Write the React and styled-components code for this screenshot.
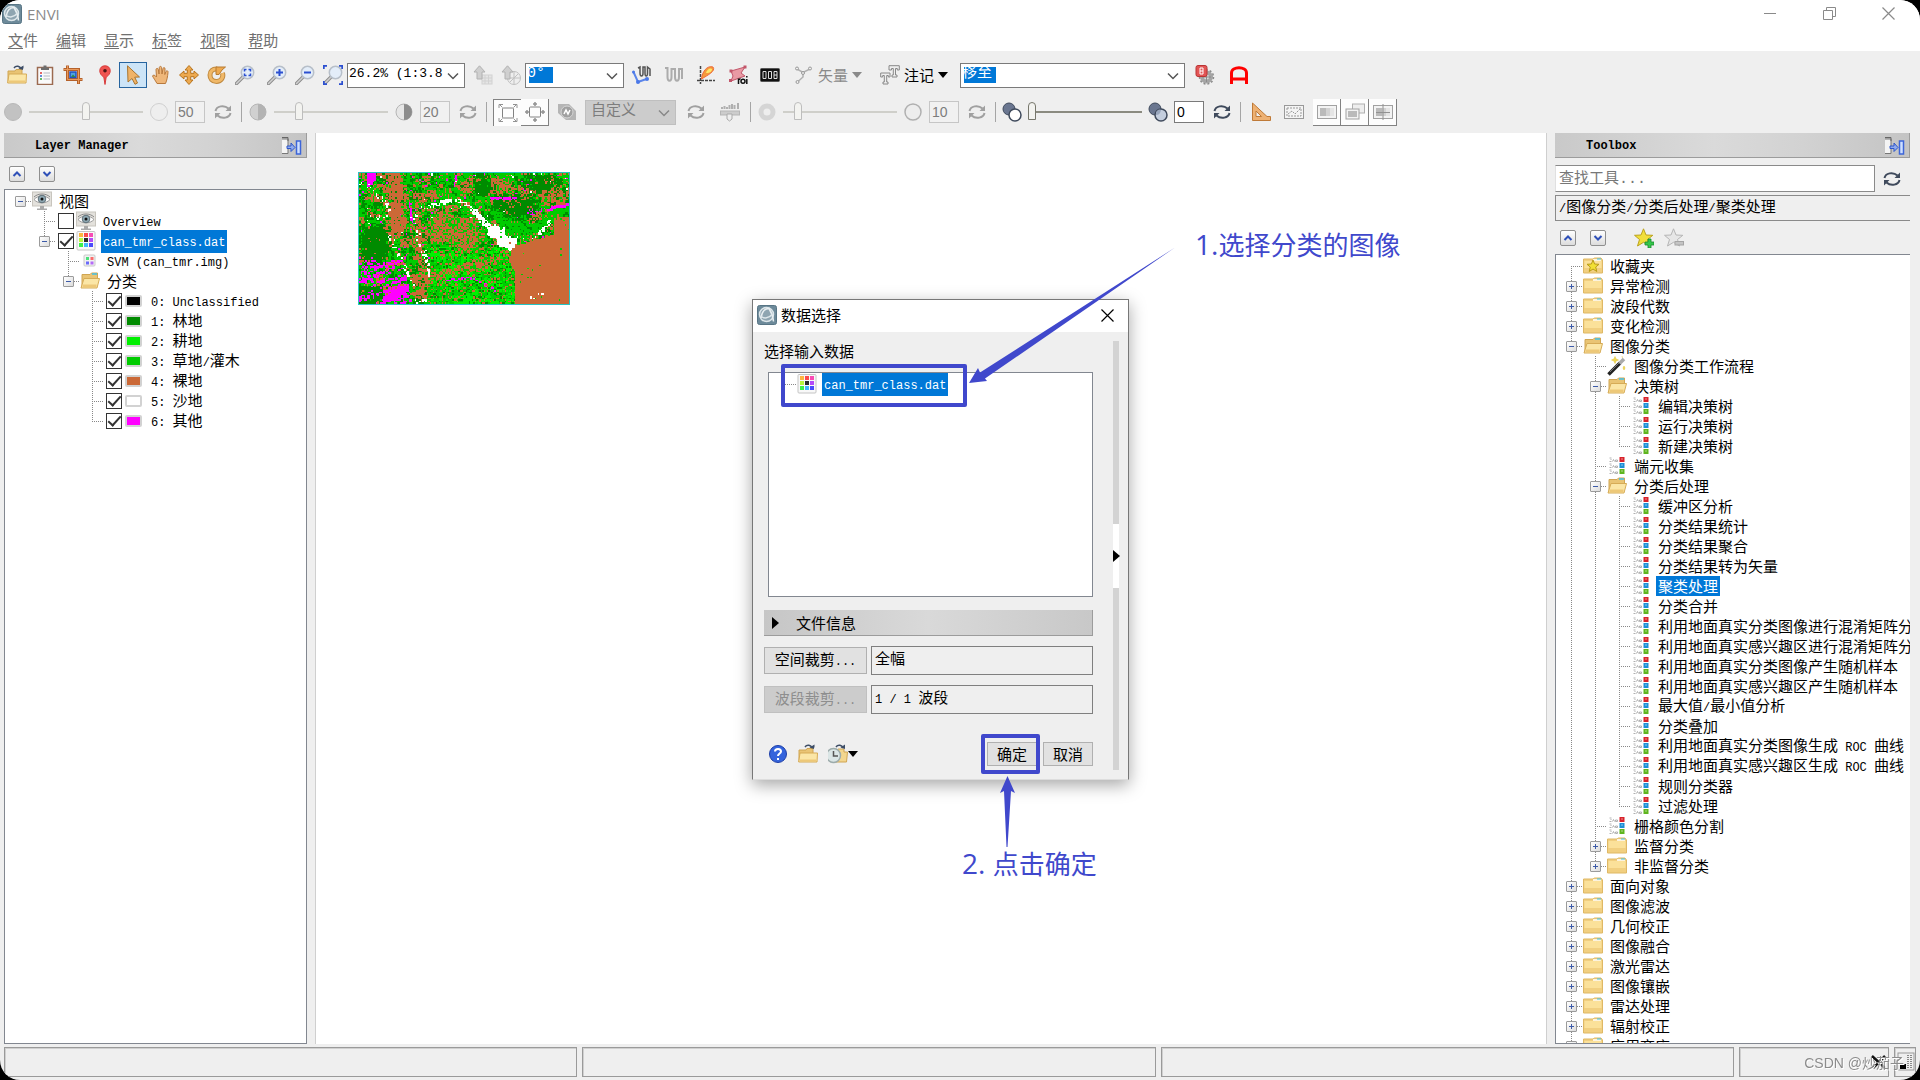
import React from "react";
import styled, { createGlobalStyle, css } from "styled-components";

const cjk = `"Noto Sans CJK SC", sans-serif`;
const mono = `"Liberation Mono", "Noto Sans CJK SC", monospace`;
const ink = "#4048cc";

const GlobalStyle = createGlobalStyle`
   * {
      box-sizing: border-box;
   }

   body {
      margin: 0;
      background: #000;
      font-family: ${cjk};
      font-size: 15px;
      line-height: 20px;
      color: #000;
   }

   button, input, select {
      font: inherit;
      color: inherit;
      margin: 0;
      padding: 0;
      border-radius: 0;
   }

   svg {
      display: block;
      flex: none;
   }
`;

/* ---------- shell ---------- */

const Window = styled.div`
   display: flex;
   flex-direction: column;
   height: 100vh;
   overflow: hidden;
   border-radius: 20px;
   background: #efefef;
`;

const TitleBar = styled.header`
   display: flex;
   align-items: center;
   height: 29px;
   padding: 0 20px 2px 2px;
   background: #fff;
`;

const AppName = styled.h1`
   flex: 1;
   margin: 0 0 0 5px;
   font-family: "Open Sans", sans-serif;
   font-size: 15px;
   font-weight: 400;
   color: #8a8a8a;
`;

const WindowButtons = styled.div`
   display: flex;
   gap: 35px;
`;

const PlainButton = styled.button`
   display: flex;
   align-items: center;
   justify-content: center;
   border: 0;
   background: none;
`;

const WindowButton = styled(PlainButton)`
   width: 24px;
   height: 24px;
   color: #8a8a8a;
`;

const MenuBar = styled.nav`
   display: flex;
   gap: 18px;
   height: 22px;
   padding-left: 8px;
   background: #fff;
`;

const MenuItem = styled(PlainButton)`
   color: #707070;
   white-space: nowrap;

   u {
      text-underline-offset: 2px;
   }
`;

/* ---------- tool bars ---------- */

const ToolBars = styled.div`
   display: flex;
   flex-direction: column;
   gap: 9px;
   padding: 10px 0 7px 3px;
`;

const ToolRow = styled.div`
   display: flex;
   align-items: center;
   gap: ${props => props.$gap || 0}px;
   height: 28px;
`;

const Group = styled.div`
   display: flex;
   align-items: center;
   gap: ${props => props.$gap || 0}px;
`;

const Tool = styled(PlainButton)`
   width: 28px;
   height: 28px;
   opacity: ${props => (props.$dim ? 0.55 : 1)};
   ${props =>
      props.$active &&
      css`
         border: 1px solid #26649f;
         background: #cce4f7;
         height: 26px;
      `}
`;

const MenuTool = styled(PlainButton)`
   gap: 4px;
   padding: 0 6px;
   color: ${props => (props.$dim ? "#8a8a8a" : "#000")};
`;

const ResetButton = styled(PlainButton)`
   width: 24px;
`;

const Combo = styled.div`
   position: relative;
   width: ${props => props.$width}px;
   color: ${props => (props.$dim ? "#888" : "#555")};

   svg {
      position: absolute;
      right: 6px;
      top: 9px;
      pointer-events: none;
   }
`;

const Select = styled.select`
   appearance: none;
   display: block;
   width: 100%;
   height: 25px;
   padding: 0 20px 4px 1px;
   border: 1px solid #7a7a7a;
   outline: 0;
   font-family: ${mono};
   font-size: ${props => props.$size || 15}px;
   background: #fff;
   color: #000;
   ${props =>
      props.$mark &&
      css`
         color: #fff;
         background: linear-gradient(#0078d7, #0078d7) 3px 3px /
            ${props.$mark}px 16px no-repeat #fff;
      `}

   option {
      color: #000;
   }

   &:disabled {
      opacity: 1;
      padding: 0 20px 0 5px;
      border-color: #bfbfbf;
      background: #cccccc;
      color: #7d7d7d;
   }
`;

const Separator = styled.span`
   width: 1px;
   height: 20px;
   margin: 0 6px;
   background: #a5a5a5;
`;

const Range = styled.input`
   appearance: none;
   width: 114px;
   height: 20px;
   background: none;

   &::-webkit-slider-runnable-track {
      height: 2px;
      background: ${props => (props.disabled ? "#cfcfca" : "#8b8b80")};
   }

   &::-webkit-slider-thumb {
      appearance: none;
      width: 8px;
      height: 18px;
      margin-top: -9px;
      border: 1px solid ${props => (props.disabled ? "#bdbdbd" : "#77776c")};
      border-radius: 4px 4px 0 0;
      background: #f3f3f0;
   }
`;

const NumberBox = styled.input`
   width: 30px;
   height: 22px;
   padding-left: 2px;
   border: 1px solid ${props => (props.disabled ? "#c6c6c6" : "#7a7a7a")};
   outline: 0;
   background: ${props => (props.disabled ? "#f1f1f1" : "#fff")};
   color: ${props => (props.disabled ? "#7d7d7d" : "#000")};
   font-family: "Liberation Sans", sans-serif;
   font-size: 14px;
`;

const Toggle = styled(PlainButton)`
   width: 28px;
   height: 27px;
   background: #fff;
   border: solid #777;
   border-width: ${props => (props.$pressed ? "1px 0 0 1px" : "0 1px 1px 0")};
   opacity: 0.9;
`;

/* ---------- panels ---------- */

const Workspace = styled.main`
   display: flex;
   flex: 1;
   min-height: 0;
   padding: 0 10px 0 4px;
`;

const Panel = styled.aside`
   display: flex;
   flex-direction: column;
   width: ${props => props.$width}px;
   min-height: 0;
`;

const PanelHeader = styled.div`
   display: flex;
   align-items: center;
   flex: none;
   height: 25px;
   padding: 1px 4px 0 31px;
   border: solid #9c9c9c;
   border-width: 0 1px 1px 0;
   background: linear-gradient(
      90deg,
      #c9c9c9,
      #dadada 45%,
      #d2d2d2 70%,
      #c4c4c4
   );

   h2 {
      flex: 1;
      margin: 0;
      font-family: ${mono};
      font-size: 12px;
      font-weight: 700;
   }
`;

const PanelTools = styled.div`
   display: flex;
   align-items: center;
   flex: none;
   height: ${props => props.$height}px;
   padding-left: 5px;
   gap: 14px;
`;

const FoldButton = styled(PlainButton)`
   width: 16px;
   height: 16px;
   border: 1px solid #8f8f8f;
   border-radius: 2px;
   background: linear-gradient(#fff, #dcdcdc);
`;

const Canvas = styled.section`
   position: relative;
   flex: 1;
   min-width: 0;
   margin: 0 8px;
   border: solid #cfcfcf;
   border-width: 0 1px;
   background: #fff;
`;

const SearchRow = styled.div`
   display: flex;
   align-items: center;
   gap: 7px;
   margin-top: 7px;
   padding-right: 8px;

   input {
      flex: 1;
      min-width: 0;
      height: 27px;
      padding: 2px 3px 0;
      border: 1px solid #8a8a8a;
      border-left-color: #e0e0e0;
      background: #fff;
      font-family: ${mono};
   }

   input::placeholder {
      color: #777;
      opacity: 1;
   }
`;

const PathBox = styled.output`
   display: block;
   flex: none;
   height: 26px;
   margin-top: 3px;
   padding: 0 3px;
   border: 1px solid #8a8a8a;
   border-right: 0;
   white-space: pre;
   overflow: hidden;
`;

/* ---------- tree ---------- */

const TreeBox = styled.ul`
   flex: 1;
   min-height: 0;
   margin: 0;
   padding: 1px 0 0 3px;
   border: 1px solid #828790;
   border-right-width: ${props => (props.$open ? 0 : 1)}px;
   background: #fff;
   list-style: none;
   overflow: hidden;
`;

const TreeRow = styled.li`
   display: flex;
   align-items: center;
   height: 20px;
   white-space: pre;
`;

const lines = {
   none: "12px 0 / 0 0",
   full: "12px 0 / 1px 100%",
   top: "12px 0 / 1px 50%",
   bottom: "12px 10px / 1px 50%"
};

const Guide = styled.span`
   display: flex;
   align-items: center;
   justify-content: center;
   flex: none;
   width: 24px;
   height: 20px;
   padding: 1px 0 0 1px;
   background: repeating-linear-gradient(#888 0 1px, transparent 1px 2px)
         ${props => lines[props.$line]} no-repeat,
      repeating-linear-gradient(90deg, #888 0 1px, transparent 1px 2px) 12px
         10px / ${props => (props.$arm ? 12 : 0)}px 1px no-repeat;
`;

const Expander = styled(PlainButton)`
   width: 11px;
   height: 11px;
   border: 1px solid #9b9b9b;
   border-radius: 1px;
   background: linear-gradient(135deg, #fff, #dcdcdc);
`;

const Check = styled.input`
   appearance: none;
   flex: none;
   width: 16px;
   height: 16px;
   margin: 0 2px;
   border: 1px solid #333;
   background: #fff;
   display: grid;
   place-items: center;

   &:checked::before {
      content: "";
      width: 11px;
      height: 5px;
      border: solid #333;
      border-width: 0 0 2px 2px;
      transform: translateY(-2px) rotate(-48deg);
   }
`;

const Swatch = styled.span`
   flex: none;
   width: 17px;
   height: 12px;
   margin: 0 2px 0 1px;
   border: 2px solid #d2d2d2;
   border-radius: 2px;
   background: ${props => props.$color};
`;

const Label = styled.span`
   margin-left: 5px;
   padding: 0 2px;
   background: ${props => (props.$selected ? "#0078d7" : "none")};
   color: ${props => (props.$selected ? "#fff" : "#000")};
`;

const Latin = styled.span`
   font-family: ${mono};
   font-size: 12px;
`;

/* ---------- dialog ---------- */

const Dialog = styled.section`
   position: absolute;
   left: 436px;
   top: 166px;
   width: 377px;
   border: 1px solid #777;
   border-bottom-color: #ddd;
   background: #efefef;
   box-shadow: 0 5px 16px rgba(0, 0, 0, 0.35);
`;

const DialogTitle = styled.header`
   display: flex;
   align-items: center;
   height: 32px;
   padding: 0 14px 2px 4px;
   background: #fff;

   h2 {
      flex: 1;
      margin: 0 0 0 4px;
      font-size: 15px;
      font-weight: 400;
   }
`;

const DialogBody = styled.div`
   display: flex;
   gap: 20px;
   padding: 9px 9px 9px 11px;
`;

const DialogMain = styled.div`
   display: flex;
   flex-direction: column;
   flex: 1;
   min-width: 0;
   gap: 10px;
`;

const DataList = styled.ul`
   height: 225px;
   margin: 1px 0 3px 4px;
   padding: 1px 0 0 4px;
   border: 1px solid #828790;
   background: #fff;
   list-style: none;
`;

const InfoHeader = styled.button`
   display: flex;
   align-items: center;
   gap: 17px;
   height: 26px;
   padding-left: 8px;
   border: solid #9c9c9c;
   border-width: 0 1px 1px 0;
   background: linear-gradient(90deg, #c6c6c6, #d9d9d9 50%, #c8c8c8);
`;

const FieldRow = styled.div`
   display: flex;
   align-items: center;
   gap: 4px;
`;

const Field = styled.output`
   flex: 1;
   height: 29px;
   padding: 1px 3px;
   border: 1px solid #7f7f7f;
   white-space: pre;
`;

const PushButton = styled.button`
   width: ${props => props.$width}px;
   height: ${props => props.$height}px;
   border: 1px solid #b0b0b0;
   background: #e1e1e1;
   white-space: nowrap;

   &:disabled {
      border-color: #c0c0c0;
      background: #cccccc;
      color: #8e8e8e;
   }
`;

const DialogFooter = styled.div`
   display: flex;
   align-items: center;
   justify-content: space-between;
   height: 24px;
   margin: 18px 0 4px 4px;
`;

const Strip = styled.div`
   display: flex;
   flex-direction: column;
   justify-content: center;
   width: 6px;
   background: #d3d3d3;

   button {
      height: 64px;
      background: #fff;
   }
`;

/* ---------- notes over the canvas ---------- */

const Mark = styled.span`
   position: absolute;
   left: ${props => props.$x}px;
   top: ${props => props.$y}px;
   width: ${props => props.$w}px;
   height: ${props => props.$h}px;
   border: 4px solid ${ink};
   border-radius: 2px;
   pointer-events: none;
`;

const Note = styled.p`
   position: absolute;
   left: ${props => props.$x}px;
   top: ${props => props.$y}px;
   margin: 0;
   font-size: 26px;
   line-height: 32px;
   color: ${ink};
   white-space: nowrap;
`;

const NoteNumber = styled.span`
   font-family: "Open Sans", sans-serif;
   font-size: 28px;
`;

const Arrows = styled.svg`
   position: absolute;
   left: 0;
   top: 0;
   pointer-events: none;
`;

const Scene = styled.div`
   position: absolute;
   left: 42px;
   top: 39px;
   border: 1px solid #27c4c4;
`;

/* ---------- status bar ---------- */

const StatusBar = styled.footer`
   display: flex;
   gap: 5px;
   height: 36px;
   padding: 3px 4px;
`;

const StatusBox = styled.div`
   display: flex;
   align-items: center;
   justify-content: flex-end;
   flex: ${props => (props.$width ? "none" : 1)};
   width: ${props => props.$width || 0}px;
   border: 1px solid #9a9a9a;
   box-shadow: inset 1px 1px 0 #d0d0d0;
`;

const Watermark = styled.p`
   position: fixed;
   right: 16px;
   bottom: 7px;
   margin: 0;
   font-family: "Liberation Sans", "Noto Sans CJK SC", sans-serif;
   font-size: 14px;
   color: #8c8c8c;
   text-shadow: 1px 1px 0 #fff;
`;

/* ---------- icons ---------- */

const Icon = ({ size = 20, children, ...rest }) => (
   <svg width={size} height={size} viewBox="0 0 20 20" fill="none" {...rest}>
      {children}
   </svg>
);

const Logo = () => (
   <Icon>
      <rect x="0.5" y="0.5" width="19" height="19" rx="2" fill="#6d8a9a" stroke="#587585" />
      <circle cx="9.500" cy="9.500" r="7" fill="#8fa5b1" stroke="#dde6ea" strokeWidth="1.500" />
      <path d="M4 13 C5 6 8 3.500 12 3.500 C15 8 16 12 16.500 16.500" stroke="#e8eef1" strokeWidth="1.500" />
      <path d="M3.500 11 C7 14 12 13.500 15.500 9" stroke="#dde6ea" strokeWidth="1.500" />
   </Icon>
);

const folderTop = "#fbe6a6";
const OpenFolder = () => (
   <Icon>
      <path d="M2 17 V3.500 H10 L11.500 2 H17.500 V8" fill="#e9c474" stroke="#d0a552" />
      <path d="M12 3 H17" stroke="#3fc1e8" strokeWidth="1.500" />
      <path d="M1 17 L4 7.500 H19.500 L17 17 Z" fill={folderTop} stroke="#d6ab56" />
      <path d="M2.500 15 H16.500" stroke="#edc878" strokeWidth="3" />
   </Icon>
);

const ClosedFolder = ({ star }) => (
   <Icon>
      <path d="M0.500 17 V3 H10 L11.500 2 H18 L19.500 4 V17 Z" fill="#f1cf80" stroke="#dfb865" />
      <path d="M10 4 H18" stroke="#fff" strokeWidth="1.500" />
      <path d="M14 3 H18" stroke="#3fc1e8" />
      <rect x="1.500" y="5" width="17" height="7" fill="#fbe19a" />
      {star && (
         <path d="M10 4 L11.600 8 L16 8.300 L12.700 11 L13.800 15.500 L10 13 L6.200 15.500 L7.300 11 L4 8.300 L8.400 8 Z" fill="#f2e034" stroke="#b99b18" />
      )}
   </Icon>
);

const OpenFile = () => (
   <Icon>
      <path d="M1 18 V6 H8 L9 4.500 H15 V9" fill="#e9c474" stroke="#d0a552" />
      <path d="M0.700 18 L2 9 H19.500 L19 18 Z" fill={folderTop} stroke="#d6ab56" />
      <path d="M2 16.500 H18" stroke="#edc878" strokeWidth="2" />
      <path d="M7 3 C9 0 13 1 14 4" stroke="#3d4d66" strokeWidth="1.500" />
      <path d="M11.500 3.500 H16.500 V0.500 Z M11.500 3.500 L16 5 V1 Z" fill="#3d4d66" />
   </Icon>
);

const RecentFile = () => (
   <Icon>
      <path d="M5 17 V6 H9 L10 5 H16 V8 H19.500 L18.500 18 H5 Z" fill="#f3d68e" stroke="#d0a552" />
      <path d="M8 3 C10 0 14 1 15 4" stroke="#3d4d66" strokeWidth="1.500" />
      <path d="M12.500 3.500 L17 5 V0.500 Z" fill="#3d4d66" />
      <circle cx="5.500" cy="11.500" r="7" fill="#dbe6e6" stroke="#9cabab" strokeWidth="1.500" />
      <path d="M5.500 7 V12 H10" stroke="#555" strokeWidth="1.500" />
   </Icon>
);

const Clipboard = () => (
   <Icon>
      <rect x="2.500" y="2.500" width="15" height="17" fill="#fff" stroke="#9b6a50" strokeWidth="1.500" />
      <rect x="4" y="4.500" width="12" height="13.500" fill="#fafafa" />
      <path d="M6 5 V2.500 H8.500 V0.500 H11.500 V2.500 H14 V5 Z" fill="#6d6d6d" />
      <path d="M8.500 8 H15 M8.500 11 H15 M8.500 14 H15" stroke="#b4bac1" />
      <path d="M5 8 H7" stroke="#d33" strokeWidth="1.500" />
      <path d="M5 11 H7" stroke="#36c" strokeWidth="1.500" />
      <path d="M5 14 H7" stroke="#3a3" strokeWidth="1.500" />
   </Icon>
);

const Crop = () => (
   <Icon>
      <path d="M4.500 0.500 V14.500 H19.500 M0.500 4.500 H15.500 V19" stroke="#b5612a" strokeWidth="3" />
      <path d="M4.500 1 V14.500 H19 M1 4.500 H15.500 V18.500" stroke="#e99a5c" />
      <rect x="7" y="7" width="6" height="5.500" fill="#4fa3e0" stroke="#1f4fc0" strokeWidth="1.500" />
      <path d="M8 12 L10 9.500 L12.500 12 Z" fill="#2a8a4a" />
   </Icon>
);

const Pin = () => (
   <Icon>
      <path d="M10 19.500 L8.800 12 C3 9 3.500 0.800 10 0.800 C16.500 0.800 17 9 11.200 12 Z" fill="#ef5350" stroke="#d83c3c" />
      <circle cx="10" cy="5.800" r="1.800" fill="#4a1515" />
   </Icon>
);

const Cursor = () => (
   <Icon>
      <path d="M4.500 0.800 L16.500 12 L11.700 12.200 L14.500 18 L12 19.300 L9 13.500 L5 17 Z" fill="#efb368" stroke="#a9752f" />
   </Icon>
);

const Hand = () => (
   <Icon>
      <path d="M6 18.500 C4 15 2.500 13 1.500 11 C2 9.500 4 10 5.500 12 L5 4.500 C5.200 3 7 3 7.300 4.500 L8 9 L8.300 2.500 C8.600 1 10.400 1 10.600 2.500 L11 9 L12 3.500 C12.500 2 14 2.300 14 4 L13.800 9.500 L15 6.500 C16 5 17.300 6 17 7.500 C16.500 12 16 15 14.500 18.500 Z" fill="#efb77a" stroke="#b8793c" />
   </Icon>
);

const Move = () => (
   <Icon>
      <path d="M10 0.500 L14 5 H11.700 V8.300 H15 V6 L19.500 10 L15 14 V11.700 H11.700 V15 H14 L10 19.500 L6 15 H8.300 V11.700 H5 V14 L0.500 10 L5 6 V8.300 H8.300 V5 H6 Z" fill="#eda94f" stroke="#b87520" />
   </Icon>
);

const Rotate = () => (
   <Icon>
      <path d="M15.500 8 C17 13.500 13 16.500 9.500 16.500 C5 16.500 3 13.500 3 10 C3 6 6 3.500 10 4" stroke="#c08a40" strokeWidth="5" />
      <path d="M15.500 8 C17 13.500 13 16.500 9.500 16.500 C5 16.500 3 13.500 3 10 C3 6 6 3.500 10 4" stroke="#f0b868" strokeWidth="3" />
      <path d="M9 9.500 V2 H18.500 L15 5 L12 9.500 Z" fill="#eda94f" stroke="#b87b30" />
   </Icon>
);

const Magnifier = ({ kind }) => (
   <Icon>
      <path d="M1.500 18.500 L8 12" stroke="#8d8d8d" strokeWidth="3.500" strokeLinecap="round" />
      <path d="M1.500 18.500 L8 12" stroke="#d0d0d0" strokeWidth="1.500" strokeLinecap="round" />
      <circle cx="12.500" cy="7.500" r="6.200" fill="#e3edf9" stroke="#b7bfc9" strokeWidth="1.500" />
      {kind === "in" && <path d="M12.500 4 V11 M9 7.500 H16" stroke="#2b4fd0" strokeWidth="2" />}
      {kind === "out" && <path d="M9 7.500 H16" stroke="#2b4fd0" strokeWidth="2" />}
      {kind === "box" && (
         <path d="M9.500 6.500 V4.500 H11.500 M13.500 4.500 H15.500 V6.500 M15.500 8.500 V10.500 H13.500 M11.500 10.500 H9.500 V8.500" stroke="#2b4fd0" strokeWidth="1.500" />
      )}
      {kind === "fit" && (
         <path d="M0.700 4 V0.700 H4 M16 0.700 H19.300 V4 M19.300 16 V19.300 H16 M4 19.300 H0.700 V16" stroke="#2b4fd0" strokeWidth="2" />
      )}
   </Icon>
);

const NorthUp = ({ dial }) => (
   <Icon>
      {dial ? (
         <g stroke="#9a9a9a">
            <circle cx="13" cy="13" r="6.500" fill="#eee" />
            <path d="M13 6.500 V19 M7 13 H19 M9 17 L17 9" />
         </g>
      ) : (
         <g stroke="#bbb">
            <rect x="9" y="10" width="10" height="9" fill="#ddd" />
            <path d="M12 10 V19 M15.500 10 V19 M9 13 H19 M9 16 H19" />
         </g>
      )}
      <path d="M6.500 0.800 L12 7 H9 V14 H4 V7 H1 Z" fill="#b5b5b5" stroke="#808080" />
   </Icon>
);

const Wave = ({ full }) => (
   <Icon>
      {full ? (
         <path d="M6 3 L8 2 V8 C8 12 11 12 11 8 V2 H13 V8 C13 12 15.500 12 15.500 8 V2 L18 4 V11" stroke="#555" strokeWidth="1.500" />
      ) : (
         <path d="M1 3 H3.500 V12 C3.500 17 7.500 17 7.500 12 V4 H11 V12 C11 17 15 17 15 12 V4 H18 V14" stroke="#777" strokeWidth="2" />
      )}
      {full && (
         <g>
            <path d="M1.500 7 L6 17 L14.500 14" stroke="#5b85ea" strokeWidth="2" />
            <circle cx="1.500" cy="7" r="1.500" fill="#4a78e8" />
            <circle cx="6" cy="17" r="2" fill="#4a78e8" />
            <circle cx="15" cy="14" r="2" fill="#4a78e8" />
         </g>
      )}
   </Icon>
);

const Scatter = () => (
   <Icon>
      <path d="M4.500 1 V19 M1 15.500 H19" stroke="#444" strokeWidth="1.500" strokeDasharray="3 1" />
      <path d="M5.500 14 C6 7 11 0 17 2 C20 6 12 10 5.500 14 Z" fill="#f59a3c" stroke="#ee6b3c" />
      <path d="M10 8 C11 4 14.500 2.500 16 4 C16 7 12.500 8.500 10 8 Z" fill="#ffe76a" />
   </Icon>
);

const Roi = () => (
   <Icon>
      <path d="M3 6 L17 2 L13 8 L17 11 L3 16 L5 11 Z" fill="#e99aa4" stroke="#c2566a" />
      <g fill="#c2566a">
         <rect x="1.500" y="4.500" width="3" height="3" />
         <rect x="15.500" y="0.500" width="3" height="3" />
         <rect x="1" y="14" width="3" height="3" />
      </g>
      <path d="M10.500 19 V13.500 M10.500 15 L12.500 13.500 M18.800 19 V14 M18.800 12.500 V11" stroke="#111" strokeWidth="1.500" />
      <circle cx="15" cy="16.300" r="2" stroke="#111" strokeWidth="1.500" />
   </Icon>
);

const Counter = () => (
   <Icon>
      <rect x="0.500" y="3.500" width="19" height="13" rx="1" fill="#111" stroke="#555" />
      <path d="M3 6.500 H6 V13.500 H3 Z M8.500 6.500 H11.500 V13.500 H8.500 Z M14 6.500 H17 V13.500 H14 Z M14 10 H17" stroke="#ddd" />
   </Icon>
);

const Vector = () => (
   <Icon>
      <path d="M3 4 L9 7.500 L17 3.500 M9 7.500 L9 12 L3.500 17" stroke="#b0b0b0" strokeWidth="1.500" />
      <g fill="#eee" stroke="#999">
         <circle cx="3" cy="3.500" r="1.500" />
         <circle cx="16" cy="3.500" r="1.500" />
         <circle cx="9" cy="8" r="1.500" />
         <circle cx="3.500" cy="17" r="1.500" />
      </g>
   </Icon>
);

const Annotate = () => (
   <Icon>
      <path d="M9 0.700 H19.300 V5 H17.300 V3.500 H15.500 V10 H17 V12 H12 V10 H13.300 V3.500 H11.500 V5 H9 Z" fill="#eee" stroke="#888" />
      <path d="M0.700 8 H10 V12 H8.300 V10.500 H6.700 V17 H8 V19 H3 V17 H4.300 V10.500 H2.700 V12 H0.700 Z" fill="#eee" stroke="#888" />
   </Icon>
);

const GearBadge = () => (
   <Icon>
      <circle cx="11.500" cy="12" r="4.500" fill="#ddd" stroke="#a5a5a5" strokeWidth="4" />
      <circle cx="11.500" cy="12" r="7" stroke="#8c8c8c" strokeWidth="1.500" strokeDasharray="2 2" />
      <path d="M11.500 7 V17 M7 12 H16" stroke="#8c8c8c" />
      <rect x="1" y="0.500" width="11" height="11" rx="2" fill="#e25555" stroke="#b93434" />
      <path d="M5 3 H8 V9 H5 Z M5 6 H8" stroke="#fff" />
   </Icon>
);

const RedA = () => (
   <Icon>
      <path d="M2.500 19 V8 C2.500 1 17.500 1 17.500 8 V19 M2.500 14 H17.500" stroke="#f00" strokeWidth="3" />
   </Icon>
);

const Refresh = ({ color = "#3f4a5c" }) => (
   <Icon>
      <path d="M2.500 9 C3.500 4 11 2.500 15.500 6.500" stroke={color} strokeWidth="2" />
      <path d="M17.500 11 C16.500 16 9 17.500 4.500 13.500" stroke={color} strokeWidth="2" />
      <path d="M18 3.500 V9 H12.500 Z M2 16.500 V11 H7.500 Z" fill={color} />
   </Icon>
);

const Ball = ({ kind }) => (
   <Icon>
      {kind === "blur" && <circle cx="10" cy="10" r="6" fill="#eee" stroke="#d5d5d5" strokeWidth="5" />}
      {kind === "dark" && <circle cx="10" cy="10" r="8.500" fill="#c2c2c2" stroke="#b8b8b8" />}
      {kind === "light" && <circle cx="10" cy="10" r="8.500" fill="#eeeeee" stroke="#cfcfcf" />}
      {kind === "ring" && <circle cx="10" cy="10" r="8" fill="#ededed" stroke="#b0b0b0" strokeWidth="1.500" />}
      {(kind === "soft" || kind === "sharp") && (
         <g>
            <circle cx="10" cy="10" r="8" fill={kind === "soft" ? "#d0d0d0" : "#e6e6e6"} stroke="#b5b5b5" />
            <path d="M10 2 A8 8 0 0 1 10 18 Z" fill={kind === "soft" ? "#b3b3b3" : "#8c8c8c"} />
         </g>
      )}
      {(kind === "over" || kind === "mix") && (
         <g stroke="#3f4a5c">
            <circle cx="7" cy="7" r="6" fill="#6a7690" />
            <circle cx="13" cy="13" r="6" fill={kind === "over" ? "#fff" : "#c4cede"} strokeWidth="1.500" />
            {kind === "mix" && <path d="M8 10 C10 7 12 7 13 8 C12.500 11 11 13 8 13" fill="#99a6bd" stroke="none" />}
         </g>
      )}
   </Icon>
);

const Extent = ({ out }) => (
   <Icon>
      <rect x="4.500" y="5" width="11" height="10" rx="1" stroke="#777" />
      {out ? (
         <path d="M10 0 V4 M8 2 H12 M10 16 V20 M8 18 H12 M0 10 H4 M2 8 V12 M16 10 H20 M18 8 V12" stroke="#888" strokeWidth="1.500" />
      ) : (
         <path d="M1 5 V1.500 H5 M2 2 L4.500 4.500 M15 1.500 H19 V5 M18 2 L15.500 4.500 M19 15 V18.500 H15 M18 18 L15.500 15.500 M5 18.500 H1 V15 M2 18 L4.500 15.500" stroke="#888" />
      )}
   </Icon>
);

const Stretch = () => (
   <Icon>
      <path d="M1 2 H12 L19 9 V18 H9 L1 11 Z" fill="#b5b5b5" />
      <circle cx="10" cy="10" r="6" fill="#a0a0a0" stroke="#d5d5d5" />
      <path d="M7 12 L9 8 L11 12 L13 8" stroke="#fff" strokeWidth="1.500" />
   </Icon>
);

const Histogram = () => (
   <Icon>
      <path d="M2 7 V5 M4.500 7 V4 M7 7 V5 M9.500 7 V3 M12 7 V2 M14.500 7 V3 M18 7 V1" stroke="#b0b0b0" strokeWidth="2" />
      <rect x="0.500" y="9" width="19" height="4" fill="#ccc" stroke="#b5b5b5" />
      <path d="M7 12 H12 V17 L9.500 19 L7 17 Z" fill="#eee" stroke="#aaa" />
   </Icon>
);

const Ruler = () => (
   <Icon>
      <path d="M1.500 1 L16 14.500 H19.500 V18.500 H1.500 Z M5 9 V14.500 H10.500 Z" fill="#eeb173" fillRule="evenodd" stroke="#bf7a38" />
   </Icon>
);

const Portal = ({ kind }) => (
   <Icon>
      {kind === "flicker" && <rect x="7.500" y="2" width="12" height="9" fill="#eee" stroke="#aaa" />}
      <rect x={kind === "flicker" ? 1 : 0.500} y={kind === "flicker" ? 7 : 3.500} width={kind === "flicker" ? 13 : 19} height={kind === "flicker" ? 10 : 13} fill="#f4f4f4" stroke="#999" />
      {kind === "view" ? (
         <path d="M3 6 H17 V14 H3 Z M4 12 L8 9 L11 12 L16 7" stroke="#999" strokeDasharray="2 1" />
      ) : (
         <g fill="#b5b5b5">
            <rect x="3" y={kind === "flicker" ? 9 : 6} width={kind === "flicker" ? 9 : 6} height={kind === "flicker" ? 6 : 8} />
            {kind !== "flicker" && <rect x="9" y="6" width="4" height="8" fill="#cfcfcf" />}
            {kind !== "flicker" && <rect x="13" y="6" width="4" height="8" fill="#e5e5e5" />}
         </g>
      )}
      {kind === "swipe" && <path d="M10 2 V18 M3 10.500 H17" stroke="#888" />}
   </Icon>
);

const Dock = () => (
   <Icon>
      <path d="M0 3 H6 V17.500 H0" fill="#f4f4f4" stroke="#777" />
      <path d="M0 1.500 H6 V5" stroke="#666" />
      <rect x="14.500" y="5" width="4" height="13" fill="#cfe0ff" stroke="#3d65d8" strokeWidth="1.500" />
      <path d="M5 10 H9 V7 L13 11.500 L9 15.500 V12.500 H5 Z" fill="#8fabf0" stroke="#2f56c8" />
   </Icon>
);

const Chevron = () => (
   <svg width="12" height="8" viewBox="0 0 12 8" fill="none">
      <path d="M1 1.500 L6 6.500 L11 1.500" stroke="currentColor" strokeWidth="1.500" />
   </svg>
);

const FoldIcon = ({ up }) => (
   <svg width="10" height="8" viewBox="0 0 10 8" fill="none">
      <path d={up ? "M1.500 6 L5 2.500 L8.500 6" : "M1.500 2 L5 5.500 L8.500 2"} stroke="#2f50b8" strokeWidth="2" />
   </svg>
);

const Caret = () => (
   <svg width="10" height="6" viewBox="0 0 10 6">
      <path d="M0 0 H10 L5 6 Z" fill="currentColor" />
   </svg>
);

const RightCaret = () => (
   <svg width="7" height="12" viewBox="0 0 7 12">
      <path d="M0 0 L7 6 L0 12 Z" fill="#000" />
   </svg>
);

const Cross = () => (
   <svg width="13" height="13" viewBox="0 0 13 13" fill="none">
      <path d="M0.500 0.500 L12.500 12.500 M12.500 0.500 L0.500 12.500" stroke="currentColor" strokeWidth="1.200" />
   </svg>
);

const ViewEye = () => (
   <Icon>
      <rect x="0.500" y="1" width="19" height="14" fill="#e3e1dc" stroke="#c8c5be" />
      <path d="M8 15 H12 V17.500 H15 V19 H5 V17.500 H8 Z" fill="#aaa" />
      <path d="M2 8.500 C6 4 14 4 18 8.500 C14 13 6 13 2 8.500 Z" fill="#fff" stroke="#999" />
      <circle cx="10" cy="8" r="3.800" fill="#8fa8b2" stroke="#5f7078" />
      <circle cx="10" cy="8" r="1.500" fill="#111" />
      <path d="M2 6 C6 2 14 2 18 6" stroke="#888" />
   </Icon>
);

const gridColors = ["#fdb540", "#fb4b4b", "#f84bb4", "#b9f53c", "#2a2a2a", "#b44bf8", "#3df04b", "#41b8fb", "#4b4bfb"];
const ClassGrid = () => (
   <Icon>
      <rect x="1" y="0.500" width="18" height="18.500" rx="1" fill="#f8f8f8" stroke="#c4c4c4" />
      {gridColors.map((color, i) => (
         <rect key={color} x={3 + (i % 3) * 5} y={2 + Math.floor(i / 3) * 5} width="4" height="4" fill={color} />
      ))}
   </Icon>
);

const SmallGrid = () => (
   <Icon>
      <rect x="4" y="4" width="11" height="11" rx="1" fill="#f1f1f1" stroke="#c9c9c9" />
      <rect x="6" y="6" width="3" height="3" fill="#4be07a" />
      <rect x="10.500" y="6" width="3" height="3" fill="#fb6a6a" />
      <rect x="6" y="10.500" width="3" height="3" fill="#6a6afb" />
      <rect x="10.500" y="10.500" width="3" height="3" fill="#b46af8" />
   </Icon>
);

const ToolIcon = () => (
   <Icon>
      {["#d8222a", "#1d8fd6", "#5fb51e"].map((color, i) => (
         <g key={color} transform={`translate(0 ${i * 6})`}>
            <path d="M2.500 2 H4.500 M3.500 3.500 H4.500 M2.500 5.500 H4.500 M5.500 5.500 L6.500 3.500 L7.500 5.500 M8.500 4 H10.500 V5.500 H8.500 Z" stroke="#b0b0b0" />
            <rect x="13" y="1.500" width="4" height="4" fill={color} stroke={color} />
            <path d="M14 3 H16" stroke="#fff" strokeOpacity="0.5" />
         </g>
      ))}
   </Icon>
);

const Wand = () => (
   <Icon>
      <path d="M1.500 18.500 L13 7" stroke="#222" strokeWidth="3.500" />
      <path d="M3 16 L12 7" stroke="#777" />
      <path d="M12.500 7.500 L17 3" stroke="#aaa" strokeWidth="3.500" />
      <path d="M8 0.500 L9 3 L11.500 4 L9 5 L8 7.500 L7 5 L4.500 4 L7 3 Z M15 0 L15.500 2 M17 10 L18 12 L17 14 L16 12 Z" fill="#f0d850" stroke="#e0c030" strokeWidth="0.500" />
   </Icon>
);

const starPath = "M9.500 0.800 L12 7 L18.800 7.300 L13.500 11.500 L15.500 18 L9.500 14.300 L3.500 18 L5.500 11.500 L0.500 7.300 L7 7 Z";
const Star = ({ minus }) => (
   <Icon>
      <path d={starPath} fill={minus ? "#e6e6e6" : "#f1df3a"} stroke={minus ? "#b5b5b5" : "#bba21e"} />
      {minus ? (
         <rect x="11" y="13.500" width="8.500" height="3.500" fill="#c4c4c4" stroke="#a5a5a5" />
      ) : (
         <path d="M14 11 H17 V14 H20 V17 H17 V20 H14 V17 H11 V14 H14 Z" fill="#35c64b" stroke="#1b8c2e" strokeWidth="0.800" />
      )}
   </Icon>
);

const Help = () => (
   <Icon>
      <circle cx="10" cy="10" r="8.500" fill="#3564dc" stroke="#1e3fa8" />
      <path d="M7 7.500 C7 4 13 4 13 7.500 C13 9.500 10 9.500 10 12 M10 14 V16" stroke="#fff" strokeWidth="2" />
   </Icon>
);

/* ---------- classified scene ---------- */

const hash = (x, y) => {
   const n = Math.sin(x * 127.1 + y * 311.7) * 43758.5453;
   return n - Math.floor(n);
};

const noise = (x, y) => {
   const ix = Math.floor(x);
   const iy = Math.floor(y);
   const fx = x - ix;
   const fy = y - iy;
   const a = hash(ix, iy) * (1 - fx) + hash(ix + 1, iy) * fx;
   const b = hash(ix, iy + 1) * (1 - fx) + hash(ix + 1, iy + 1) * fx;
   return a * (1 - fy) + b * fy;
};

const nearLine = (x, y, points) => {
   let best = 999;
   for (let i = 1; i < points.length; i++) {
      const [ax, ay] = points[i - 1];
      const [bx, by] = points[i];
      const dx = bx - ax;
      const dy = by - ay;
      const t = Math.max(0, Math.min(1, ((x - ax) * dx + (y - ay) * dy) / (dx * dx + dy * dy)));
      best = Math.min(best, Math.hypot(x - ax - t * dx, y - ay - t * dy));
   }
   return best;
};

const inEllipse = (x, y, cx, cy, rx, ry) => ((x - cx) / rx) ** 2 + ((y - cy) / ry) ** 2 < 1;

const GREEN = "#00cc00";
const LIME = "#00f000";
const DARK = "#008b00";
const BROWN = "#cb6937";
const PINK = "#ff00ff";
const WHITE = "#ffffff";

// small bright features: sand bars, roads, water edges
const features = [
   { color: WHITE, reach: 2, density: 0.4, line: [[62, 34], [78, 30], [94, 26], [102, 27], [113, 35]] },
   { color: WHITE, reach: 2, density: 1, line: [[82, 28], [91, 26]] },
   { color: WHITE, reach: 3, density: 0.75, line: [[115, 38], [124, 48], [132, 55]] },
   { color: WHITE, reach: 2, density: 0.28, line: [[8, 12], [27, 30], [29, 42], [16, 44]] },
   { color: WHITE, reach: 2, density: 0.2, line: [[30, 63], [44, 92], [55, 110]] },
   { color: WHITE, reach: 2, density: 0.22, line: [[55, 42], [60, 72], [68, 90]] },
   { color: WHITE, reach: 1.5, density: 0.6, line: [[66, 82], [69, 96], [69, 112]] },
   { color: WHITE, reach: 2, density: 0.4, line: [[58, 130], [66, 126]] },
   { color: WHITE, reach: 2, density: 0.7, line: [[190, 48], [180, 59]] },
   { color: WHITE, reach: 1.5, density: 0.4, line: [[172, 124], [182, 120]] },
   { color: PINK, reach: 1.5, density: 0.8, line: [[130, 24], [156, 25]] },
   { color: PINK, reach: 1.5, density: 0.8, line: [[188, 36], [196, 33], [210, 31]] },
   { color: PINK, reach: 1, density: 0.7, line: [[96, 1], [94, 14]] },
   { color: PINK, reach: 1, density: 0.8, line: [[50, 28], [52, 48]] },
   { color: PINK, reach: 1.5, density: 0.4, line: [[88, 106], [115, 104], [134, 116]] },
   { color: PINK, reach: 3, density: 0.3, line: [[170, 38], [184, 37]] }
];

const classify = (px, py) => {
   const r = hash(px + 3, py + 7);
   const q = hash(px * 1.7 + 11, py * 2.3 + 5);
   const blob = nearLine(px, py, [[136, 58], [142, 65], [149, 69]]);
   if (blob < 4 + noise(px / 3, py / 3) * 5 && r < 0.95) return WHITE;
   for (const item of features) {
      if (r < item.density && nearLine(px, py, item.line) < item.reach) return item.color;
   }

   // frayed edges for everything below
   const x = px + (hash(px, py * 3) - 0.5) * 9;
   const y = py + (hash(px * 5, py) - 0.5) * 7;
   const n = noise(px / 4, py / 4);
   const m = noise(px / 9 + 40, py / 6 + 20);
   if (px < 48 - (110 - py) * 0.2 && py > 86) {
      const streak = noise((px + py) / 14, (py + px * 0.35) / 2.2);
      if (streak + (q - 0.5) * 0.5 > 0.5 - (py - 100) / 150 + (px < 24 && py > 108 ? 0.4 : 0)) return PINK;
      if (px < 24 && py > 112 && q < 0.8) return DARK;
   }
   if (px < 16 && py < 22 && n > 0.62) return PINK;
   if (nearLine(x, y, [[122, 30], [157, 58], [178, 56], [192, 40], [210, 36]]) < 4 && q < 0.9) return GREEN;
   if (inEllipse(x, y, 153, 33, 26, 12) && q < 0.82) return DARK;
   if (inEllipse(x, y, 14, 72, 15, 20) && q < 0.85) return DARK;
   if (py > 72 && px > 150 + Math.max(0, py - 88) * 0.6 + (m - 0.5) * 8) return q < 0.985 ? BROWN : n > 0.7 ? LIME : GREEN;
   if (py > 57 + (205 - px) * 0.3 && px > 155) return BROWN;
   if (px > 194 && py > 42) return q < 0.99 ? BROWN : LIME;
   if (inEllipse(px, py, 122, 10, 10, 12) || inEllipse(px, py, 180, 8, 24, 8)) {
      if (q < 0.65) return DARK;
   }
   if (x > 112 && y > 13 && y < 26 && (x > 180 || y < 20) && q < 0.6) return BROWN;
   if (x > 28 && x < 44 && y < 64 && q < 0.88) return BROWN;
   if (nearLine(x, y, [[60, 22], [57, 60], [61, 90], [66, 112]]) < 3 && q < 0.8) return BROWN;
   if (inEllipse(x, y, 84, 54, 17, 15) || inEllipse(x, y, 108, 60, 12, 18)) return q < 0.66 ? BROWN : GREEN;
   if (nearLine(x, y, [[72, 105], [95, 94], [118, 92], [146, 82]]) < 4 && q < 0.6) return BROWN;
   if (py > 72 && px > 70) return q < 0.15 ? DARK : q < 0.3 ? BROWN : n + (r - 0.5) * 0.5 > 0.5 ? LIME : GREEN;
   if (m > 0.66 && q < 0.6) return BROWN;
   if (r < 0.02) return PINK;
   if (r > 0.99) return WHITE;
   if (n + (q - 0.5) * 0.7 > 0.72) return DARK;
   if (q > 0.82 || (m < 0.3 && q > 0.6)) return BROWN;
   if (px < 70 && q < 0.1) return DARK;
   return GREEN;
};

const buildScene = () => {
   const paths = {};
   for (let y = 0; y < 131; y += 1.5) {
      for (let x = 0; x < 210; x += 1.5) {
         const color = classify(x, y);
         paths[color] = (paths[color] || "") + `M${x} ${y}h1.5v1.5h-1.5z`;
      }
   }
   return Object.entries(paths);
};

const scene = buildScene();

const ClassifiedImage = () => (
   <svg width="210" height="131" viewBox="0 0 210 131" shapeRendering="crispEdges">
      <rect width="210" height="131" fill={GREEN} />
      {scene.map(([color, d]) => (
         <path key={color} d={d} fill={color} />
      ))}
   </svg>
);

/* ---------- data ---------- */

const layers = [
   { level: 0, text: "视图", icon: <ViewEye />, toggle: "-" },
   { level: 1, text: "Overview", icon: <ViewEye />, check: false },
   { level: 1, text: "can_tmr_class.dat", icon: <ClassGrid />, toggle: "-", check: true, selected: true },
   { level: 2, text: "SVM (can_tmr.img)", icon: <SmallGrid /> },
   { level: 2, text: "分类", icon: <OpenFolder />, toggle: "-" },
   { level: 3, text: "0: Unclassified", check: true, color: "#000" },
   { level: 3, text: "1: 林地", check: true, color: DARK },
   { level: 3, text: "2: 耕地", check: true, color: LIME },
   { level: 3, text: "3: 草地/灌木", check: true, color: GREEN },
   { level: 3, text: "4: 裸地", check: true, color: BROWN },
   { level: 3, text: "5: 沙地", check: true, color: WHITE },
   { level: 3, text: "6: 其他", check: true, color: PINK }
];

const closed = (level, text) => ({ level, text, icon: <ClosedFolder />, toggle: "+" });
const opened = (level, text) => ({ level, text, icon: <OpenFolder />, toggle: "-" });
const tool = (level, text) => ({ level, text, icon: <ToolIcon /> });

const toolbox = [
   { level: 0, text: "收藏夹", icon: <ClosedFolder star /> },
   closed(0, "异常检测"),
   closed(0, "波段代数"),
   closed(0, "变化检测"),
   opened(0, "图像分类"),
   { level: 1, text: "图像分类工作流程", icon: <Wand /> },
   opened(1, "决策树"),
   tool(2, "编辑决策树"),
   tool(2, "运行决策树"),
   tool(2, "新建决策树"),
   tool(1, "端元收集"),
   opened(1, "分类后处理"),
   tool(2, "缓冲区分析"),
   tool(2, "分类结果统计"),
   tool(2, "分类结果聚合"),
   tool(2, "分类结果转为矢量"),
   { ...tool(2, "聚类处理"), selected: true },
   tool(2, "分类合并"),
   tool(2, "利用地面真实分类图像进行混淆矩阵分析"),
   tool(2, "利用地面真实感兴趣区进行混淆矩阵分析"),
   tool(2, "利用地面真实分类图像产生随机样本"),
   tool(2, "利用地面真实感兴趣区产生随机样本"),
   tool(2, "最大值/最小值分析"),
   tool(2, "分类叠加"),
   tool(2, "利用地面真实分类图像生成 ROC 曲线"),
   tool(2, "利用地面真实感兴趣区生成 ROC 曲线"),
   tool(2, "规则分类器"),
   tool(2, "过滤处理"),
   tool(1, "栅格颜色分割"),
   closed(1, "监督分类"),
   closed(1, "非监督分类"),
   closed(0, "面向对象"),
   closed(0, "图像滤波"),
   closed(0, "几何校正"),
   closed(0, "图像融合"),
   closed(0, "激光雷达"),
   closed(0, "图像镶嵌"),
   closed(0, "雷达处理"),
   closed(0, "辐射校正"),
   closed(0, "应用商店")
];

/* ---------- pieces ---------- */

// latin runs use the narrower fixed-width face
const Mixed = ({ text }) =>
   text
      .split(/([\x20-\x7e]+)/)
      .filter(Boolean)
      .map((part, i) => (/^[\x20-\x7e]/.test(part) ? <Latin key={i}>{part}</Latin> : part));

const hasNext = (rows, index, level) => {
   for (let i = index + 1; i < rows.length; i++) {
      if (rows[i].level < level) return false;
      if (rows[i].level === level) return true;
   }
   return false;
};

const guideLine = (rows, index, level) => {
   const next = hasNext(rows, index, level);
   if (level < rows[index].level) return next ? "full" : "none";
   if (level === 0 && index === 0) return next ? "bottom" : "none";
   return next ? "full" : "top";
};

const Tree = ({ rows, open, label }) => (
   <TreeBox $open={open} aria-label={label}>
      {rows.map((row, index) => (
         <TreeRow key={row.text}>
            {Array.from({ length: row.level + 1 }, (_, level) => (
               <Guide key={level} $line={guideLine(rows, index, level)} $arm={level === row.level}>
                  {level === row.level && row.toggle && (
                     <Expander aria-label={`${row.text} ${row.toggle}`}>
                        <svg width="9" height="9" viewBox="0 0 9 9">
                           <path d={row.toggle === "+" ? "M2 4.500 H7 M4.500 2 V7" : "M2 4.500 H7"} stroke="#3c5aa8" />
                        </svg>
                     </Expander>
                  )}
               </Guide>
            ))}
            {row.check !== undefined && (
               <Check type="checkbox" defaultChecked={row.check} aria-label={row.text} />
            )}
            {row.icon}
            {row.color && <Swatch $color={row.color} />}
            <Label $selected={row.selected}>
               <Mixed text={row.text} />
            </Label>
         </TreeRow>
      ))}
   </TreeBox>
);

const ComboBox = ({ label, value, width, ...rest }) => (
   <Combo $width={width} $dim={rest.disabled}>
      <Select aria-label={label} defaultValue={value} {...rest}>
         <option>{value}</option>
      </Select>
      <Chevron />
   </Combo>
);

const SliderGroup = ({ label, from, to, at, value, disabled }) => (
   <Group $gap={6}>
      <Ball kind={from} />
      <Range type="range" aria-label={label} defaultValue={at} disabled={disabled} />
      <Ball kind={to} />
      <NumberBox aria-label={`${label} value`} defaultValue={value} disabled={disabled} />
      <ResetButton aria-label={`${label} reset`} disabled={disabled}>
         <Refresh color={disabled ? "#a0a0a0" : undefined} />
      </ResetButton>
   </Group>
);

const Header = ({ title }) => (
   <PanelHeader>
      <h2>{title}</h2>
      <PlainButton aria-label="dock">
         <Dock />
      </PlainButton>
   </PanelHeader>
);

const FoldButtons = () => (
   <>
      <FoldButton aria-label="collapse">
         <FoldIcon up />
      </FoldButton>
      <FoldButton aria-label="expand">
         <FoldIcon />
      </FoldButton>
   </>
);

const DataDialog = () => (
   <Dialog role="dialog" aria-labelledby="dialog-title">
      <DialogTitle>
         <Logo />
         <h2 id="dialog-title">数据选择</h2>
         <PlainButton aria-label="close">
            <Cross />
         </PlainButton>
      </DialogTitle>
      <DialogBody>
         <DialogMain>
            <span id="data-label">选择输入数据</span>
            <DataList aria-labelledby="data-label">
               <TreeRow>
                  <Guide $line="none" $arm />
                  <ClassGrid />
                  <Label $selected>
                     <Mixed text="can_tmr_class.dat" />
                  </Label>
               </TreeRow>
            </DataList>
            <InfoHeader>
               <RightCaret />
               文件信息
            </InfoHeader>
            <FieldRow>
               <PushButton $width={103} $height={27}>
                  <Mixed text="空间裁剪..." />
               </PushButton>
               <Field>全幅</Field>
            </FieldRow>
            <FieldRow>
               <PushButton $width={103} $height={27} disabled>
                  <Mixed text="波段裁剪..." />
               </PushButton>
               <Field>
                  <Mixed text="1 / 1 波段" />
               </Field>
            </FieldRow>
            <DialogFooter>
               <Group $gap={10}>
                  <PlainButton aria-label="help"><Help /></PlainButton>
                  <PlainButton aria-label="open"><OpenFile /></PlainButton>
                  <PlainButton aria-label="recent">
                     <RecentFile />
                     <Caret />
                  </PlainButton>
               </Group>
               <Group $gap={6}>
                  <PushButton $width={50} $height={24}>确定</PushButton>
                  <PushButton $width={50} $height={24}>取消</PushButton>
               </Group>
            </DialogFooter>
         </DialogMain>
         <Strip>
            <PlainButton aria-label="more">
               <RightCaret />
            </PlainButton>
         </Strip>
      </DialogBody>
   </Dialog>
);

const menus = ["文件", "编辑", "显示", "标签", "视图", "帮助"];

const App = () => (
   <>
      <GlobalStyle />
      <Window>
         <TitleBar>
            <Logo />
            <AppName>ENVI</AppName>
            <WindowButtons>
               <WindowButton aria-label="minimize">
                  <svg width="12" height="2"><rect width="12" height="1" fill="#8a8a8a" /></svg>
               </WindowButton>
               <WindowButton aria-label="restore">
                  <svg width="13" height="13" fill="none" stroke="#8a8a8a">
                     <path d="M0.500 3.500 H9.500 V12.500 H0.500 Z M3.500 3.500 V0.500 H12.500 V9.500 H9.500" />
                  </svg>
               </WindowButton>
               <WindowButton aria-label="close">
                  <Cross />
               </WindowButton>
            </WindowButtons>
         </TitleBar>
         <MenuBar>
            {menus.map(name => (
               <MenuItem key={name}>
                  <u>{name[0]}</u>
                  {name[1]}
               </MenuItem>
            ))}
         </MenuBar>

         <ToolBars>
            <ToolRow $gap={4}>
               <Group>
                  <Tool aria-label="open"><OpenFile /></Tool>
                  <Tool aria-label="data manager"><Clipboard /></Tool>
                  <Tool aria-label="crop"><Crop /></Tool>
               </Group>
               <Group>
                  <Tool aria-label="pin"><Pin /></Tool>
                  <Tool aria-label="select" $active><Cursor /></Tool>
                  <Tool aria-label="pan"><Hand /></Tool>
                  <Tool aria-label="fly"><Move /></Tool>
                  <Tool aria-label="rotate"><Rotate /></Tool>
                  <Tool aria-label="zoom"><Magnifier kind="box" /></Tool>
               </Group>
               <Group>
                  <Tool aria-label="zoom in"><Magnifier kind="in" /></Tool>
                  <Tool aria-label="zoom out"><Magnifier kind="out" /></Tool>
                  <Tool aria-label="zoom fit"><Magnifier kind="fit" /></Tool>
                  <ComboBox label="zoom level" value="26.2% (1:3.8)" width={118} $size={13} />
               </Group>
               <Group>
                  <Tool aria-label="north up" $dim><NorthUp /></Tool>
                  <Tool aria-label="rotate to" $dim><NorthUp dial /></Tool>
                  <ComboBox label="rotation" value="0°" width={99} $mark={24} />
               </Group>
               <Tool aria-label="profile"><Wave full /></Tool>
               <Tool aria-label="spectral" $dim><Wave /></Tool>
               <Tool aria-label="scatter"><Scatter /></Tool>
               <Tool aria-label="region of interest"><Roi /></Tool>
               <Tool aria-label="counter"><Counter /></Tool>
               <Group $gap={6}>
                  <MenuTool $dim>
                     <Vector />
                     矢量
                     <Caret />
                  </MenuTool>
                  <MenuTool>
                     <Annotate />
                     注记
                     <Caret />
                  </MenuTool>
                  <ComboBox label="go to" value="移至" width={225} $mark={32} />
                  <Tool aria-label="extensions"><GearBadge /></Tool>
                  <Tool aria-label="arc"><RedA /></Tool>
               </Group>
            </ToolRow>
            <ToolRow>
               <SliderGroup label="brightness" from="dark" to="light" at={50} value="50" disabled />
               <Separator />
               <SliderGroup label="contrast" from="soft" to="sharp" at={20} value="20" disabled />
               <Separator />
               <Group $gap={8}>
                  <Group>
                     <Toggle aria-label="full extent" $pressed><Extent /></Toggle>
                     <Toggle aria-label="view extent"><Extent out /></Toggle>
                  </Group>
                  <Stretch />
                  <ComboBox label="stretch" value="自定义" width={91} disabled />
                  <ResetButton aria-label="reset stretch"><Refresh color="#a0a0a0" /></ResetButton>
                  <Tool aria-label="histogram"><Histogram /></Tool>
               </Group>
               <Separator />
               <SliderGroup label="sharpen" from="blur" to="ring" at={10} value="10" disabled />
               <Separator />
               <SliderGroup label="transparency" from="over" to="mix" at={0} value="0" />
               <Separator />
               <Group $gap={5}>
                  <Tool aria-label="measure"><Ruler /></Tool>
                  <Tool aria-label="portal"><Portal kind="view" /></Tool>
                  <Group>
                     <Toggle aria-label="blend"><Portal /></Toggle>
                     <Toggle aria-label="flicker"><Portal kind="flicker" /></Toggle>
                     <Toggle aria-label="swipe"><Portal kind="swipe" /></Toggle>
                  </Group>
               </Group>
            </ToolRow>
         </ToolBars>

         <Workspace>
            <Panel $width={303}>
               <Header title="Layer Manager" />
               <PanelTools $height={31}>
                  <FoldButtons />
               </PanelTools>
               <Tree rows={layers} label="Layer Manager" />
            </Panel>

            <Canvas>
               <Scene>
                  <ClassifiedImage />
               </Scene>
               <DataDialog />
               <Mark $x={465} $y={231} $w={186} $h={43} />
               <Mark $x={665} $y={601} $w={59} $h={40} />
               <Arrows width="900" height="730" fill={ink}>
                  <path d="M653 250 L662 235 L664 239.500 L859 114.500 L669 245.500 L671 248 Z" />
                  <path d="M691.500 643 L699 660 L695 658 L691.500 714 L690.500 714 L688 658 L684 660 Z" />
               </Arrows>
               <Note $x={879} $y={95}>
                  <NoteNumber>1.</NoteNumber>选择分类的图像
               </Note>
               <Note $x={646} $y={714}>
                  <NoteNumber>2. </NoteNumber>点击确定
               </Note>
            </Canvas>

            <Panel $width={355}>
               <Header title="Toolbox" />
               <SearchRow>
                  <input aria-label="查找工具" placeholder="查找工具..." />
                  <PlainButton aria-label="refresh"><Refresh /></PlainButton>
               </SearchRow>
               <PathBox>
                  <Mixed text="/图像分类/分类后处理/聚类处理" />
               </PathBox>
               <PanelTools $height={33}>
                  <FoldButtons />
                  <span />
                  <Group $gap={10}>
                     <PlainButton aria-label="add favorite"><Star /></PlainButton>
                     <PlainButton aria-label="remove favorite"><Star minus /></PlainButton>
                  </Group>
               </PanelTools>
               <Tree rows={toolbox} label="Toolbox" open />
            </Panel>
         </Workspace>

         <StatusBar>
            <StatusBox />
            <StatusBox />
            <StatusBox />
            <StatusBox $width={150}>
               <svg width="18" height="18" viewBox="0 0 18 18" stroke="#111" strokeWidth="2.500">
                  <path d="M2 3 L15 15 M15 3 L3 15" />
               </svg>
            </StatusBox>
            <StatusBox $width={22}>
               <svg width="18" height="20" viewBox="0 0 18 20" fill="none">
                  <rect x="1" y="1" width="16" height="17" stroke="#999" />
                  <path d="M11 3 V17 M14 3 V17" stroke="#888" strokeWidth="2" strokeDasharray="1 1" />
                  <rect x="3" y="12" width="6" height="5" fill="#000" />
               </svg>
            </StatusBox>
         </StatusBar>
         <Watermark>CSDN @炒茄子</Watermark>
      </Window>
   </>
);

export default App;
